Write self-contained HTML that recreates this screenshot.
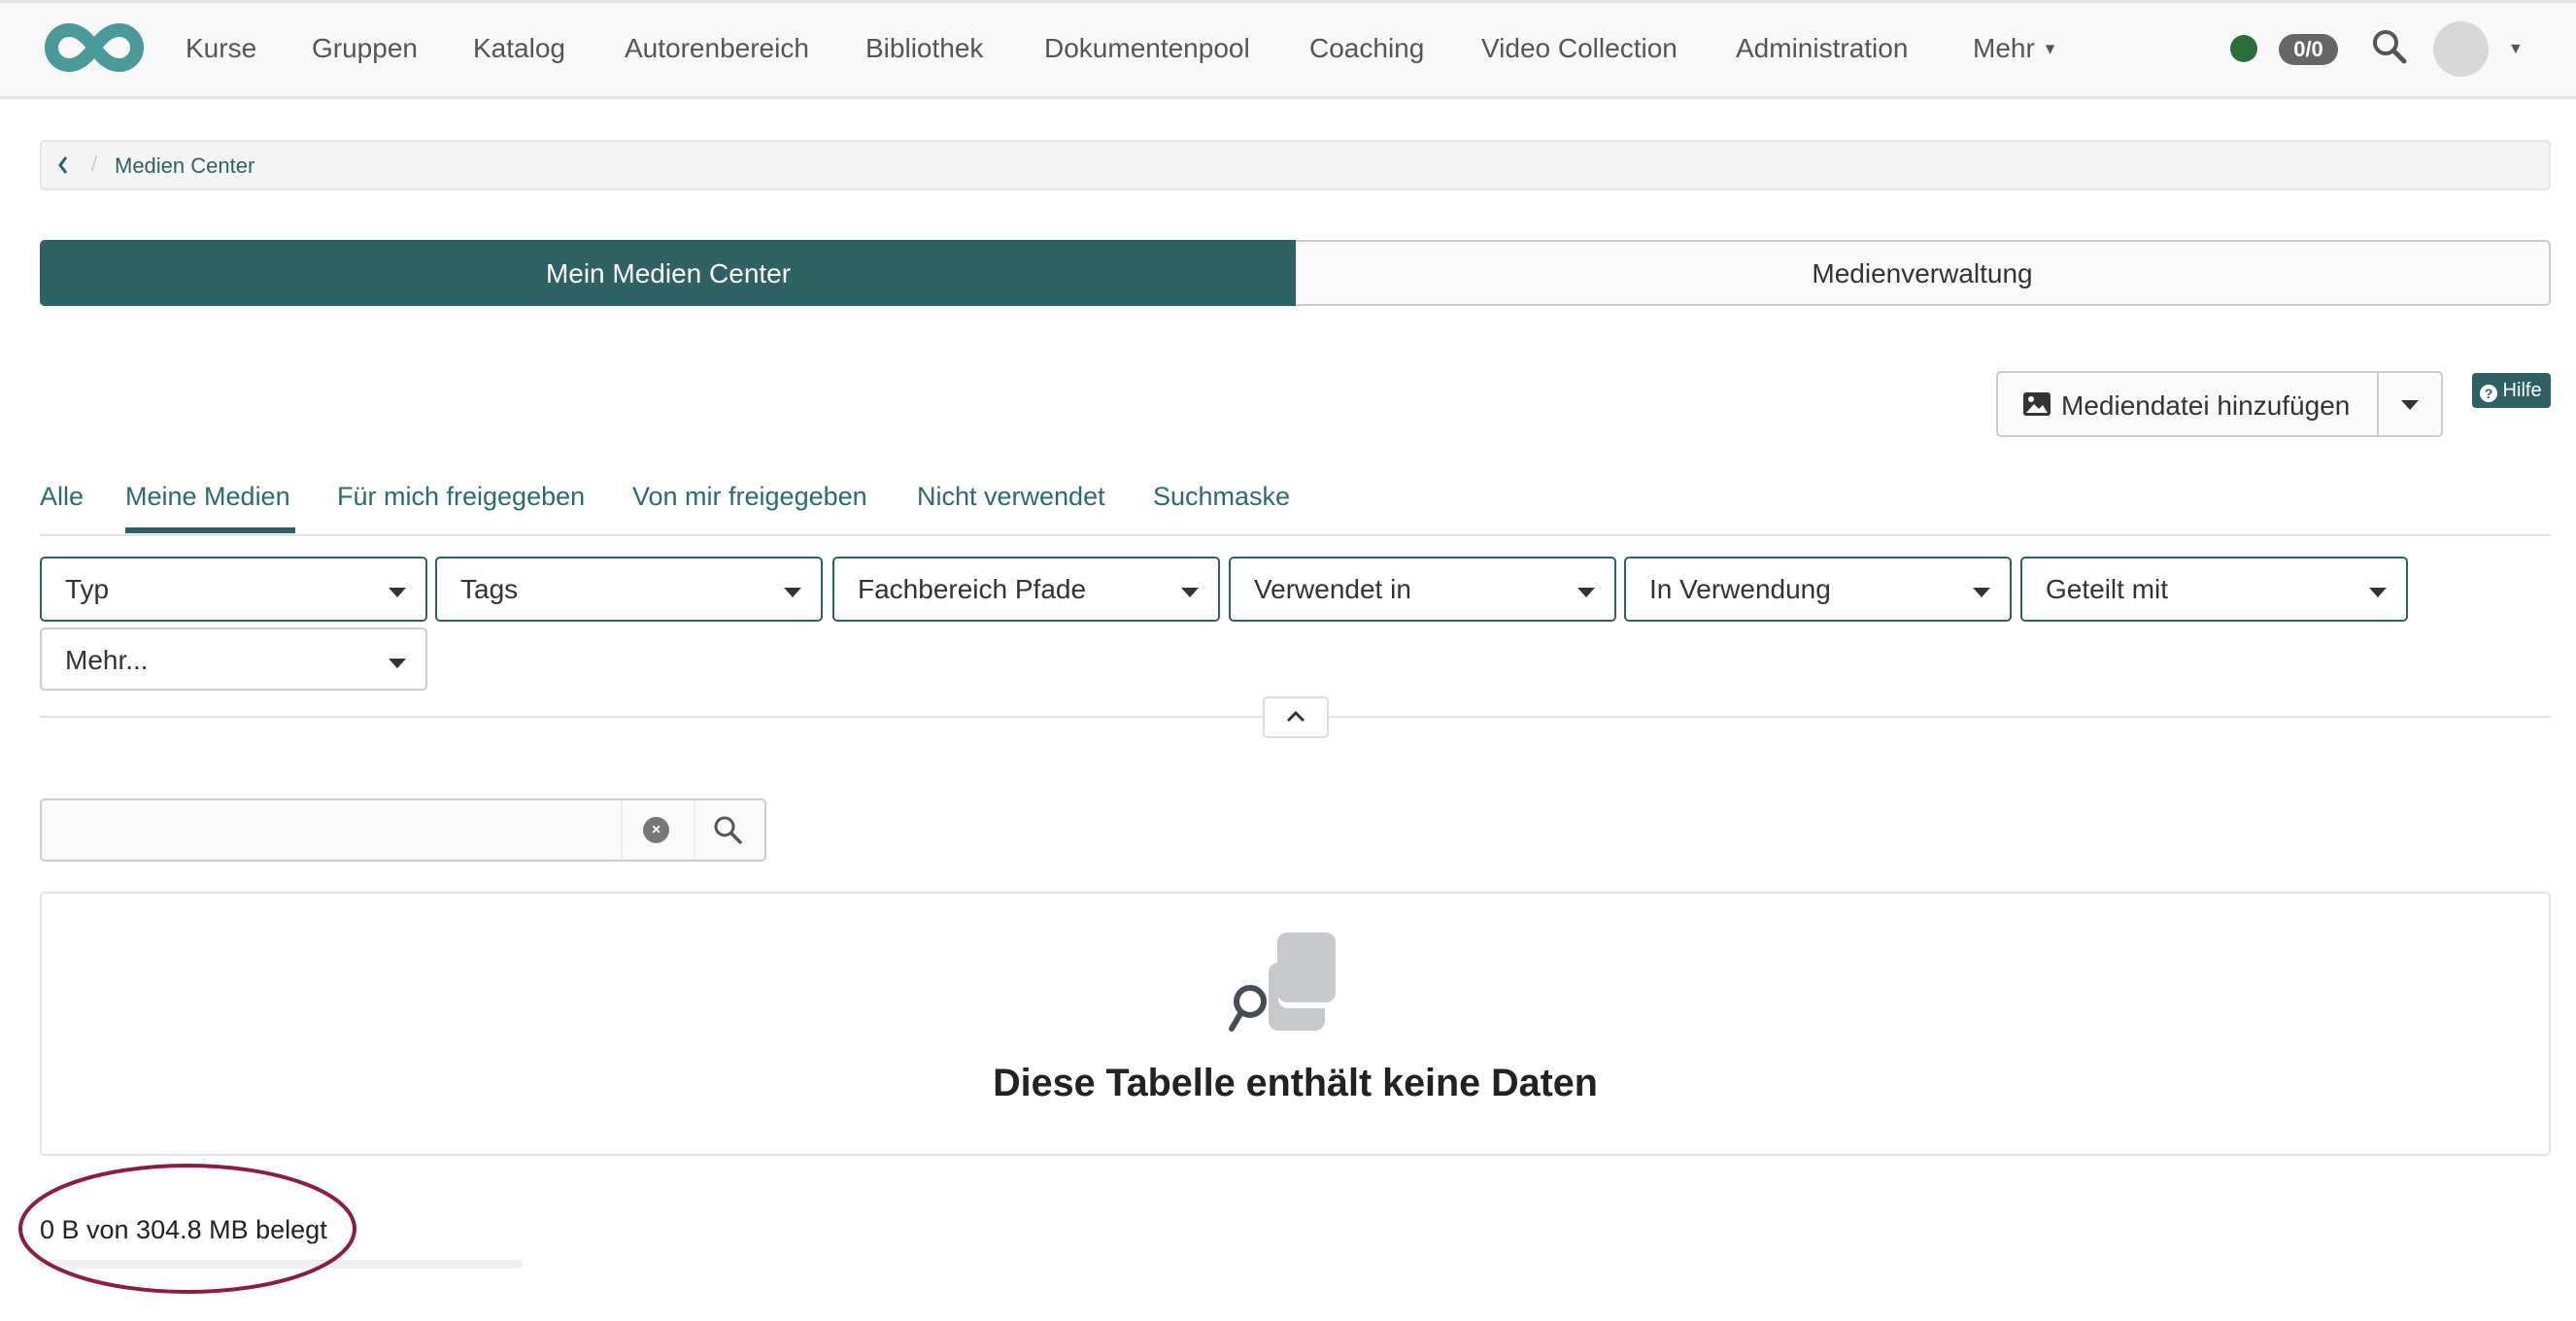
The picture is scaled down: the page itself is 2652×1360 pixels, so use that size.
<!DOCTYPE html>
<html><head><meta charset="utf-8"><style>
*{box-sizing:border-box;margin:0;padding:0}
body{width:2652px;height:1360px;overflow:hidden;background:#fff;font-family:"Liberation Sans",sans-serif;position:relative;color:#333}
.a{position:absolute}
.nav{left:0;top:0;width:2652px;height:102px;background:#f8f8f8;border-top:3px solid #e4e4e4;border-bottom:3px solid #e4e4e4}
.ni{position:absolute;top:34px;font-size:28px;color:#555}
.dd{position:absolute;height:67px;width:399px;border:2px solid #2d6163;border-radius:5px;font-size:28px;color:#333;padding:16px 24px}
.dd:after{content:"";position:absolute;right:20px;top:30px;border-left:9px solid transparent;border-right:9px solid transparent;border-top:10px solid #333}
.ft{position:absolute;top:496px;font-size:27px;color:#2a6b6d}
</style></head><body>
<div class="a nav"></div>
<svg class="a" style="left:44px;top:22px" width="106" height="54" viewBox="0 0 106 54"><path d="M53 27C43 13 35 9 27 9A18 18 0 0 0 27 45C35 45 43 41 53 27C63 13 71 9 79 9A18 18 0 0 1 79 45C71 45 63 41 53 27Z" fill="none" stroke="#4a9a9a" stroke-width="14"/></svg>
<div class="ni" style="left:191px">Kurse</div>
<div class="ni" style="left:321px">Gruppen</div>
<div class="ni" style="left:487px">Katalog</div>
<div class="ni" style="left:643px">Autorenbereich</div>
<div class="ni" style="left:891px">Bibliothek</div>
<div class="ni" style="left:1075px">Dokumentenpool</div>
<div class="ni" style="left:1348px">Coaching</div>
<div class="ni" style="left:1525px">Video Collection</div>
<div class="ni" style="left:1787px">Administration</div>
<div class="ni" style="left:2031px">Mehr <span style="font-size:16px;vertical-align:middle">▼</span></div>
<div class="a" style="left:2296px;top:36px;width:28px;height:28px;border-radius:50%;background:#2a6e3c"></div>
<div class="a" style="left:2346px;top:35px;width:61px;height:32px;border-radius:16px;background:#666;color:#fff;font-size:22px;font-weight:bold;text-align:center;line-height:32px">0/0</div>
<svg class="a" style="left:2440px;top:28px" width="40" height="40" viewBox="0 0 40 40"><circle cx="16" cy="16" r="11" fill="none" stroke="#555" stroke-width="4"/><path d="M24 24L35 35" stroke="#555" stroke-width="5" stroke-linecap="round"/></svg>
<div class="a" style="left:2505px;top:22px;width:57px;height:57px;border-radius:50%;background:#d8d8d8"></div>
<div class="a" style="left:2582px;top:42px;font-size:16px;color:#555">▼</div>

<div class="a" style="left:41px;top:144px;width:2585px;height:52px;background:#f5f5f5;border:2px solid #e6e6e6;border-radius:5px"></div>
<svg class="a" style="left:58px;top:159px" width="14" height="22" viewBox="0 0 14 22"><path d="M10 3L4 11L10 19" fill="none" stroke="#2d6163" stroke-width="3"/></svg>
<div class="a" style="left:94px;top:156px;font-size:22px;color:#ccc">/</div>
<div class="a" style="left:118px;top:158px;font-size:22px;color:#2d6163">Medien Center</div>

<div class="a" style="left:41px;top:247px;width:1294px;height:68px;background:#2d6163;border-radius:5px 0 0 5px;color:#fff;font-size:28px;text-align:center;line-height:70px">Mein Medien Center</div>
<div class="a" style="left:1334px;top:247px;width:1292px;height:68px;background:#fafafa;border:2px solid #ccc;border-left:none;border-radius:0 5px 5px 0;color:#333;font-size:28px;text-align:center;line-height:66px">Medienverwaltung</div>

<div class="a" style="left:2055px;top:382px;width:460px;height:68px;border:2px solid #ccc;border-radius:5px;background:#fafafa"></div>
<div class="a" style="left:2447px;top:384px;width:2px;height:64px;background:#ccc"></div>
<svg class="a" style="left:2082px;top:403px" width="30" height="26" viewBox="0 0 30 26"><rect x="1" y="1" width="28" height="24" rx="3" fill="#333"/><circle cx="9" cy="8" r="3" fill="#fff"/><path d="M4 22L12 13L17 18L21 14L26 22Z" fill="#fff"/></svg>
<div class="a" style="left:2122px;top:402px;font-size:28px;color:#333">Mediendatei hinzufügen</div>
<div class="a" style="left:2472px;top:412px;border-left:9px solid transparent;border-right:9px solid transparent;border-top:10px solid #333"></div>
<div class="a" style="left:2545px;top:384px;width:81px;height:36px;background:#2d6163;border-radius:4px;color:#fff;font-size:20px;line-height:36px;padding-left:8px"><span style="display:inline-block;width:18px;height:18px;border-radius:50%;background:#fff;color:#2d6163;font-size:14px;font-weight:bold;text-align:center;line-height:18px;vertical-align:-2px">?</span> Hilfe</div>

<div class="ft" style="left:41px">Alle</div>
<div class="ft" style="left:129px">Meine Medien</div>
<div class="ft" style="left:347px">Für mich freigegeben</div>
<div class="ft" style="left:651px">Von mir freigegeben</div>
<div class="ft" style="left:944px">Nicht verwendet</div>
<div class="ft" style="left:1187px">Suchmaske</div>
<div class="a" style="left:41px;top:550px;width:2585px;height:2px;background:#e2e2e2"></div>
<div class="a" style="left:129px;top:543px;width:175px;height:6px;background:#2d6163"></div>

<div class="dd" style="left:41px;top:573px">Typ</div>
<div class="dd" style="left:448px;top:573px">Tags</div>
<div class="dd" style="left:857px;top:573px">Fachbereich Pfade</div>
<div class="dd" style="left:1265px;top:573px">Verwendet in</div>
<div class="dd" style="left:1672px;top:573px">In Verwendung</div>
<div class="dd" style="left:2080px;top:573px">Geteilt mit</div>
<div class="dd" style="left:41px;top:646px;height:65px;border-color:#ccc">Mehr...</div>

<div class="a" style="left:41px;top:737px;width:2585px;height:2px;background:#e2e2e2"></div>
<div class="a" style="left:1300px;top:717px;width:68px;height:43px;background:#fff;border:2px solid #ddd;border-radius:5px"></div>
<svg class="a" style="left:1322px;top:728px" width="24" height="18" viewBox="0 0 24 18"><path d="M4 14L12 6L20 14" fill="none" stroke="#333" stroke-width="3"/></svg>

<div class="a" style="left:41px;top:822px;width:748px;height:65px;border:2px solid #ccc;border-radius:5px;background:#fafafa"></div>
<div class="a" style="left:639px;top:824px;width:2px;height:61px;background:#eee"></div>
<div class="a" style="left:714px;top:824px;width:2px;height:61px;background:#eee"></div>
<div class="a" style="left:662px;top:841px;width:27px;height:27px;border-radius:50%;background:#777;color:#fff;font-size:16px;font-weight:bold;text-align:center;line-height:27px">×</div>
<svg class="a" style="left:733px;top:838px" width="34" height="34" viewBox="0 0 34 34"><circle cx="13" cy="13" r="9" fill="none" stroke="#555" stroke-width="3"/><path d="M20 20L29 29" stroke="#555" stroke-width="3.5" stroke-linecap="round"/></svg>

<div class="a" style="left:41px;top:918px;width:2585px;height:272px;border:2px solid #e4e4e4;border-radius:5px"></div>
<svg class="a" style="left:1250px;top:955px" width="150" height="120" viewBox="0 0 150 120"><rect x="65" y="5" width="60" height="72" rx="10" fill="#c8c9cd"/><path d="M66 36a10 10 0 0 0-10 10v50a10 10 0 0 0 10 10h38a10 10 0 0 0 10-10V83H76a10 10 0 0 1-10-10Z" fill="#c8c9cd"/><circle cx="37" cy="76" r="14" fill="none" stroke="#474d55" stroke-width="6"/><path d="M28 87L18 104" stroke="#474d55" stroke-width="6" stroke-linecap="round"/></svg>
<div class="a" style="left:0;width:2667px;top:1093px;text-align:center;font-size:39.5px;font-weight:bold;color:#222">Diese Tabelle enthält keine Daten</div>

<div class="a" style="left:41px;top:1251px;font-size:27px;color:#222">0 B von 304.8 MB belegt</div>
<div class="a" style="left:41px;top:1297px;width:497px;height:9px;background:#f0f0f0;border-radius:4px"></div>
<svg class="a" style="left:16px;top:1195px" width="354" height="140" viewBox="0 0 354 140"><ellipse cx="177" cy="70" rx="172" ry="65" fill="none" stroke="#8b1e3f" stroke-width="4"/></svg>
</body></html>
